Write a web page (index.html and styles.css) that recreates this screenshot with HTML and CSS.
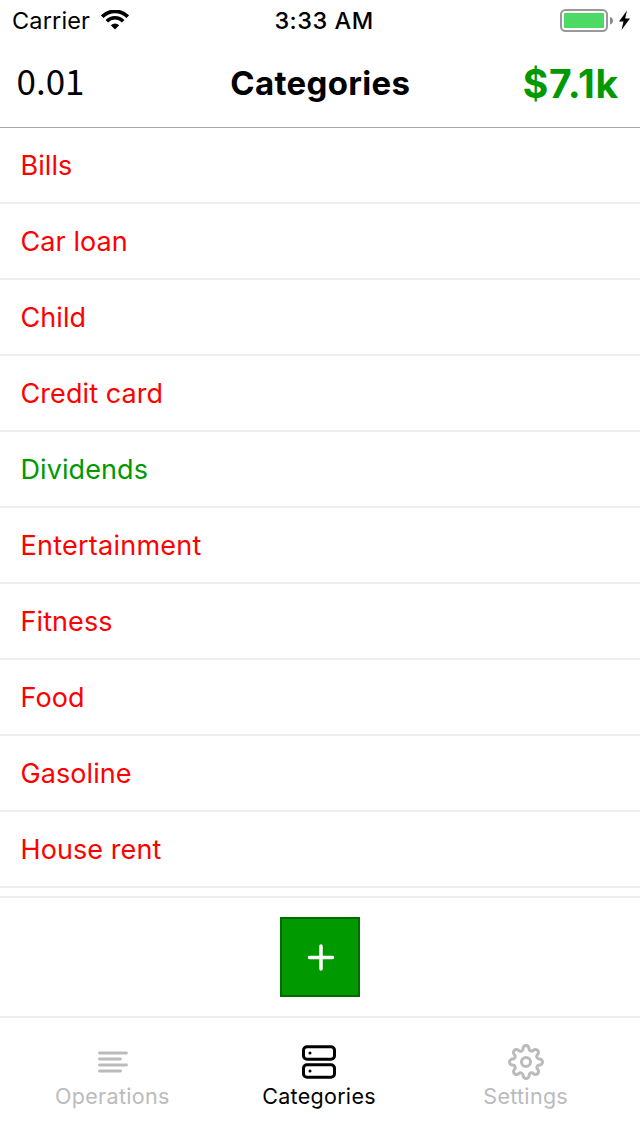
FILE: index.html
```html
<!DOCTYPE html>
<html lang="en">
<head>
<meta charset="utf-8">
<title>Categories</title>
<link rel="stylesheet" href="styles.css">
</head>
<body>
<div class="app">
  <div class="status">
    <div class="status-left">
      <span class="carrier">Carrier</span>
      <svg class="wifi" width="28" height="20" viewBox="0 0 28 20" fill="none" stroke="#000">
        <path d="M1.2 6.6A18.1 18.1 0 0 1 26.8 6.6" stroke-width="3.7"/>
        <path d="M5.8 11.2A11.6 11.6 0 0 1 22.2 11.2" stroke-width="3.5"/>
        <path d="M9.8 15.2A6 6 0 0 1 18.2 15.2L14 19.6Z" fill="#000" stroke="none"/>
      </svg>
    </div>
    <span class="time">3:33 AM</span>
    <svg class="battery" width="72" height="24" viewBox="0 0 72 24">
      <rect x="1" y="2" width="46" height="21" rx="4.5" fill="#fff" stroke="#999" stroke-width="2"/>
      <rect x="4" y="5" width="40" height="15" rx="1" fill="#4cd964"/>
      <path d="M50 9Q53 10 53 12.700T50 16.500Z" fill="#888"/>
      <path d="M67 2.500L59 13.500H63.500L61.500 22L70 10.500H65.200Z" fill="#000"/>
    </svg>
  </div>
  <header class="header">
    <span class="version">0.01</span>
    <h1 class="title">Categories</h1>
    <span class="balance">$7.1k</span>
  </header>
  <main class="list">
    <div class="row">Bills</div>
    <div class="row">Car loan</div>
    <div class="row">Child</div>
    <div class="row">Credit card</div>
    <div class="row income">Dividends</div>
    <div class="row loose">Entertainment</div>
    <div class="row">Fitness</div>
    <div class="row">Food</div>
    <div class="row">Gasoline</div>
    <div class="row">House rent</div>
  </main>
  <div class="actions">
    <button class="add" aria-label="Add category">
      <svg width="76" height="76" viewBox="0 0 76 76" stroke="#fff" stroke-width="3.5" stroke-linecap="round">
        <path d="M27.500 38.500H50.500M39 27V50"/>
      </svg>
    </button>
  </div>
  <nav class="tabs">
    <a class="tab">
      <svg width="36" height="36" viewBox="0 0 36 36" fill="none" stroke="currentColor" stroke-width="2.800" stroke-linecap="round">
        <path d="M5.500 9H32.500M5.500 15H26.500M5.500 21H32.500M5.500 27H26.500"/>
      </svg>
      <span class="label">Operations</span>
    </a>
    <a class="tab active">
      <svg width="36" height="36" viewBox="0 0 36 36" fill="none" stroke="currentColor" stroke-width="3">
        <rect x="2.500" y="2.700" width="31" height="12.500" rx="3.500"/>
        <rect x="2.500" y="20.700" width="31" height="12.500" rx="3.500"/>
        <circle cx="9" cy="9" r="1.500" fill="currentColor" stroke="none"/>
        <circle cx="9" cy="27" r="1.500" fill="currentColor" stroke="none"/>
      </svg>
      <span class="label">Categories</span>
    </a>
    <a class="tab">
      <svg width="36" height="36" viewBox="0 0 24 24" fill="none" stroke="currentColor" stroke-width="2" stroke-linecap="round" stroke-linejoin="round">
        <circle cx="12" cy="12" r="3"/>
        <path d="M19.4 15a1.65 1.65 0 0 0 .33 1.82l.06.06a2 2 0 0 1 0 2.83 2 2 0 0 1-2.83 0l-.06-.06a1.65 1.65 0 0 0-1.82-.33 1.65 1.65 0 0 0-1 1.51V21a2 2 0 0 1-2 2 2 2 0 0 1-2-2v-.09A1.65 1.65 0 0 0 9 19.4a1.65 1.65 0 0 0-1.82.33l-.06.06a2 2 0 0 1-2.83 0 2 2 0 0 1 0-2.83l.06-.06a1.65 1.65 0 0 0 .33-1.82 1.65 1.65 0 0 0-1.51-1H3a2 2 0 0 1-2-2 2 2 0 0 1 2-2h.09A1.65 1.65 0 0 0 4.6 9a1.65 1.65 0 0 0-.33-1.82l-.06-.06a2 2 0 0 1 0-2.83 2 2 0 0 1 2.83 0l.06.06a1.65 1.65 0 0 0 1.82.33H9a1.65 1.65 0 0 0 1-1.51V3a2 2 0 0 1 2-2 2 2 0 0 1 2 2v.09a1.65 1.65 0 0 0 1 1.51 1.65 1.65 0 0 0 1.82-.33l.06-.06a2 2 0 0 1 2.83 0 2 2 0 0 1 0 2.83l-.06.06a1.65 1.65 0 0 0-.33 1.82V9a1.65 1.65 0 0 0 1.51 1H21a2 2 0 0 1 2 2 2 2 0 0 1-2 2h-.09a1.65 1.65 0 0 0-1.51 1z"/>
      </svg>
      <span class="label">Settings</span>
    </a>
  </nav>
</div>
</body>
</html>
```
FILE: styles.css
```css
* { box-sizing: border-box; }
body { margin: 0; background: #fff; color: #000; font-family: Inter, "Liberation Sans", sans-serif; }
svg { display: block; flex: none; }
.app { width: 640px; height: 1136px; display: flex; flex-direction: column; overflow: hidden; white-space: nowrap; }
.status { height: 40px; padding: 0 8px 0 12px; display: grid; grid-template-columns: 1fr auto 1fr; align-items: center; }
.status-left { display: flex; align-items: center; gap: 11px; }
.carrier { font-size: 23.5px; letter-spacing: 0.15px; }
.time { font-size: 23.5px; font-weight: 500; letter-spacing: 0.5px; padding-left: 4px; }
.battery { justify-self: end; }
.header { height: 88px; border-bottom: 1px solid #a7a7aa; padding: 0 21px 0 16.5px; display: grid; grid-template-columns: 1fr auto 1fr; align-items: center; }
.version { font-family: "Noto Sans CJK SC", sans-serif; font-size: 35px; line-height: 50px; padding-bottom: 8px; }
.title { margin: 0; font-size: 33px; line-height: 44px; font-weight: 650; letter-spacing: 0.3px; padding: 0 0 2px 5px; }
.balance { justify-self: end; color: #090; font-size: 39px; line-height: 50px; font-weight: 700; letter-spacing: 0.8px; }
.list { height: 768px; flex: none; }
.row { height: 76px; padding: 1px 20.5px 0; border-bottom: 2px solid #eee; display: flex; align-items: center; color: #f00; font-size: 27px; letter-spacing: 0.08px; }
.loose { letter-spacing: 0.25px; }
.income { color: #090; }
.actions { height: 122px; border-top: 2px solid #eee; border-bottom: 2px solid #eee; display: flex; align-items: center; justify-content: center; }
.add { width: 80px; height: 80px; padding: 0; border: 2px solid #006b00; background: #090; }
.tabs { height: 118px; padding: 26px 11px 0 9px; display: grid; grid-template-columns: repeat(3, 1fr); }
.tab { display: flex; flex-direction: column; align-items: center; color: #bbb; }
.active { color: #000; }
.label { font-size: 21.5px; line-height: 28px; margin-top: 2px; letter-spacing: 0.3px; }
```
